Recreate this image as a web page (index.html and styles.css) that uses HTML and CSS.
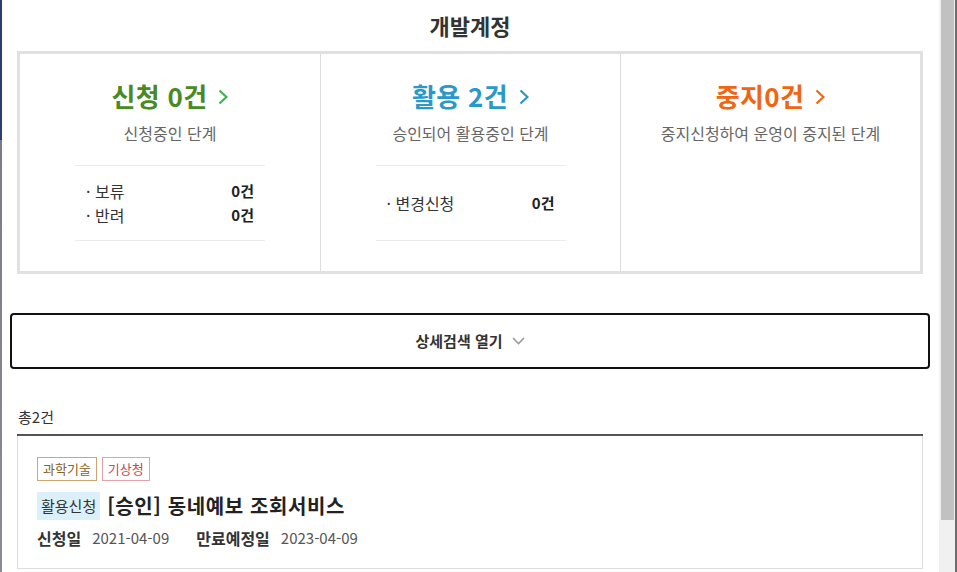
FILE: index.html
```html
<!DOCTYPE html>
<html lang="ko">
<head>
<meta charset="utf-8">
<title>개발계정</title>
<link rel="stylesheet" href="styles.css">
</head>
<body>
<div class="edge"></div>
<main class="popup">
  <h1 class="title">개발계정</h1>
  <section class="status">
    <div class="col">
      <a class="head green">신청 0건<svg class="chev" viewBox="0 0 10 16" width="10" height="16"><polyline points="1.5,1.5 8.5,8 1.5,14.5" fill="none" stroke="#3bb34a" stroke-width="2.2"/></svg></a>
      <p class="desc">신청중인 단계</p>
      <ul class="items">
        <li><span>· 보류</span><b>0건</b></li>
        <li><span>· 반려</span><b>0건</b></li>
      </ul>
    </div>
    <div class="col">
      <a class="head blue">활용 2건<svg class="chev" viewBox="0 0 10 16" width="10" height="16"><polyline points="1.5,1.5 8.5,8 1.5,14.5" fill="none" stroke="#2795c6" stroke-width="2.2"/></svg></a>
      <p class="desc">승인되어 활용중인 단계</p>
      <ul class="items">
        <li><span>· 변경신청</span><b>0건</b></li>
      </ul>
    </div>
    <div class="col">
      <a class="head orange">중지0건<svg class="chev" viewBox="0 0 10 16" width="10" height="16"><polyline points="1.5,1.5 8.5,8 1.5,14.5" fill="none" stroke="#f0650f" stroke-width="2.2"/></svg></a>
      <p class="desc">중지신청하여 운영이 중지된 단계</p>
    </div>
  </section>
  <button class="search" type="button">상세검색 열기<svg class="down" viewBox="0 0 13 8" width="13" height="8"><polyline points="1,1 6.5,6.5 12,1" fill="none" stroke="#9a9a9a" stroke-width="1.6"/></svg></button>
  <p class="total">총2건</p>
  <div class="list">
    <article class="card">
      <div class="tags">
        <span class="tag gold">과학기술</span>
        <span class="tag pink">기상청</span>
      </div>
      <div class="card-title">
        <span class="state">활용신청</span>
        <strong>[승인] 동네예보 조회서비스</strong>
      </div>
      <div class="dates">
        <b>신청일</b><span class="d1">2021-04-09</span>
        <b>만료예정일</b><span>2023-04-09</span>
      </div>
    </article>
  </div>
</main>
<div class="scrollbar"><div class="thumb"></div></div>
<div class="frame"></div>
</body>
</html>
```
FILE: styles.css
```css
* { box-sizing: border-box; }
html, body { margin: 0; padding: 0; }
body {
  width: 957px;
  height: 572px;
  overflow: hidden;
  display: flex;
  background: #fff;
  font-family: "Noto Sans CJK KR", "Noto Sans", sans-serif;
  color: #333;
}
.edge {
  width: 2px;
  flex: none;
  background: linear-gradient(#2c3f6b 0, #2c3f6b 140px, #7b7c84 140px, #8d8a93 100%);
}
.popup {
  width: 937px;
  flex: none;
  height: 572px;
  overflow: hidden;
  padding: 0 16px 0 15px;
}
.title {
  margin: 0;
  height: 51px;
  line-height: 50px;
  text-align: center;
  font-size: 22px;
  font-weight: 700;
  color: #333;
}
.status {
  height: 223px;
  border: 3px solid #e1e1e1;
  display: grid;
  grid-template-columns: repeat(3, 1fr);
}
.col {
  display: flex;
  flex-direction: column;
  align-items: center;
  padding-top: 25px;
}
.col + .col { border-left: 1px solid #dddddd; }
.head {
  display: flex;
  align-items: center;
  gap: 11px;
  font-size: 26px;
  font-weight: 700;
  line-height: 34px;
  letter-spacing: 0.3px;
  text-decoration: none;
}
.chev { display: block; margin-top: 1px; }
.green { color: #4a8a22; }
.blue { color: #2a98c9; }
.orange { color: #f0650f; }
.desc {
  margin: 9px 0 0;
  font-size: 16px;
  line-height: 22px;
  color: #666;
}
.items {
  list-style: none;
  margin: 21px 0 0;
  padding: 0 11px;
  width: 190px;
  height: 76px;
  border-top: 1px solid #ececec;
  border-bottom: 1px solid #ececec;
  display: flex;
  flex-direction: column;
  justify-content: center;
}
.items li {
  display: flex;
  justify-content: space-between;
  align-items: center;
  font-size: 16px;
  line-height: 24px;
  color: #333;
}
.items b { color: #222; font-weight: 700; font-size: 15px; }
.search {
  display: flex;
  align-items: center;
  justify-content: center;
  gap: 9px;
  margin: 39px -7px 0 -7px;
  width: calc(100% + 14px);
  height: 56px;
  border: 2px solid #111;
  border-radius: 4px;
  background: #fff;
  font-family: inherit;
  font-size: 15px;
  font-weight: 700;
  color: #333;
  padding: 0 0 2px;
}
.down { display: block; margin-top: 1px; }
.total {
  margin: 38px 0 0 1px;
  font-size: 15px;
  line-height: 20px;
  color: #333;
  padding-bottom: 7px;
}
.list {
  border-top: 2px solid #555;
}
.card {
  border: 1px solid #dddddd;
  border-top: 0;
  padding: 21px 20px 20px 19px;
}
.tags { display: flex; gap: 5px; }
.tag {
  display: inline-block;
  height: 24px;
  line-height: 22px;
  padding: 0 5px;
  font-size: 13px;
  border: 1px solid;
}
.gold { border-color: #c9a96e; color: #86621c; }
.pink { border-color: #e2a2ac; color: #c2485a; }
.card-title {
  display: flex;
  align-items: center;
  gap: 7px;
  margin-top: 10px;
}
.state {
  display: inline-block;
  height: 28px;
  line-height: 28px;
  padding: 0 4px;
  background: #dcf0fa;
  font-size: 15px;
  color: #333;
}
.card-title strong {
  font-size: 20px;
  font-weight: 700;
  color: #222;
  letter-spacing: 0.6px;
}
.dates {
  margin-top: 8px;
  font-size: 15px;
  line-height: 20px;
  display: flex;
  align-items: center;
}
.dates b { font-size: 16px; font-weight: 700; color: #333; margin-right: 11px; }
.dates span { color: #555; }
.dates .d1 { margin-right: 27px; }
.scrollbar {
  width: 16px;
  flex: none;
  background: #f0f0f0;
  padding: 0 1px 0 2px;
}
.thumb {
  height: 520px;
  background: #c1c1c1;
}
.frame {
  width: 2px;
  flex: none;
  background: #6e6e6e;
}
```
